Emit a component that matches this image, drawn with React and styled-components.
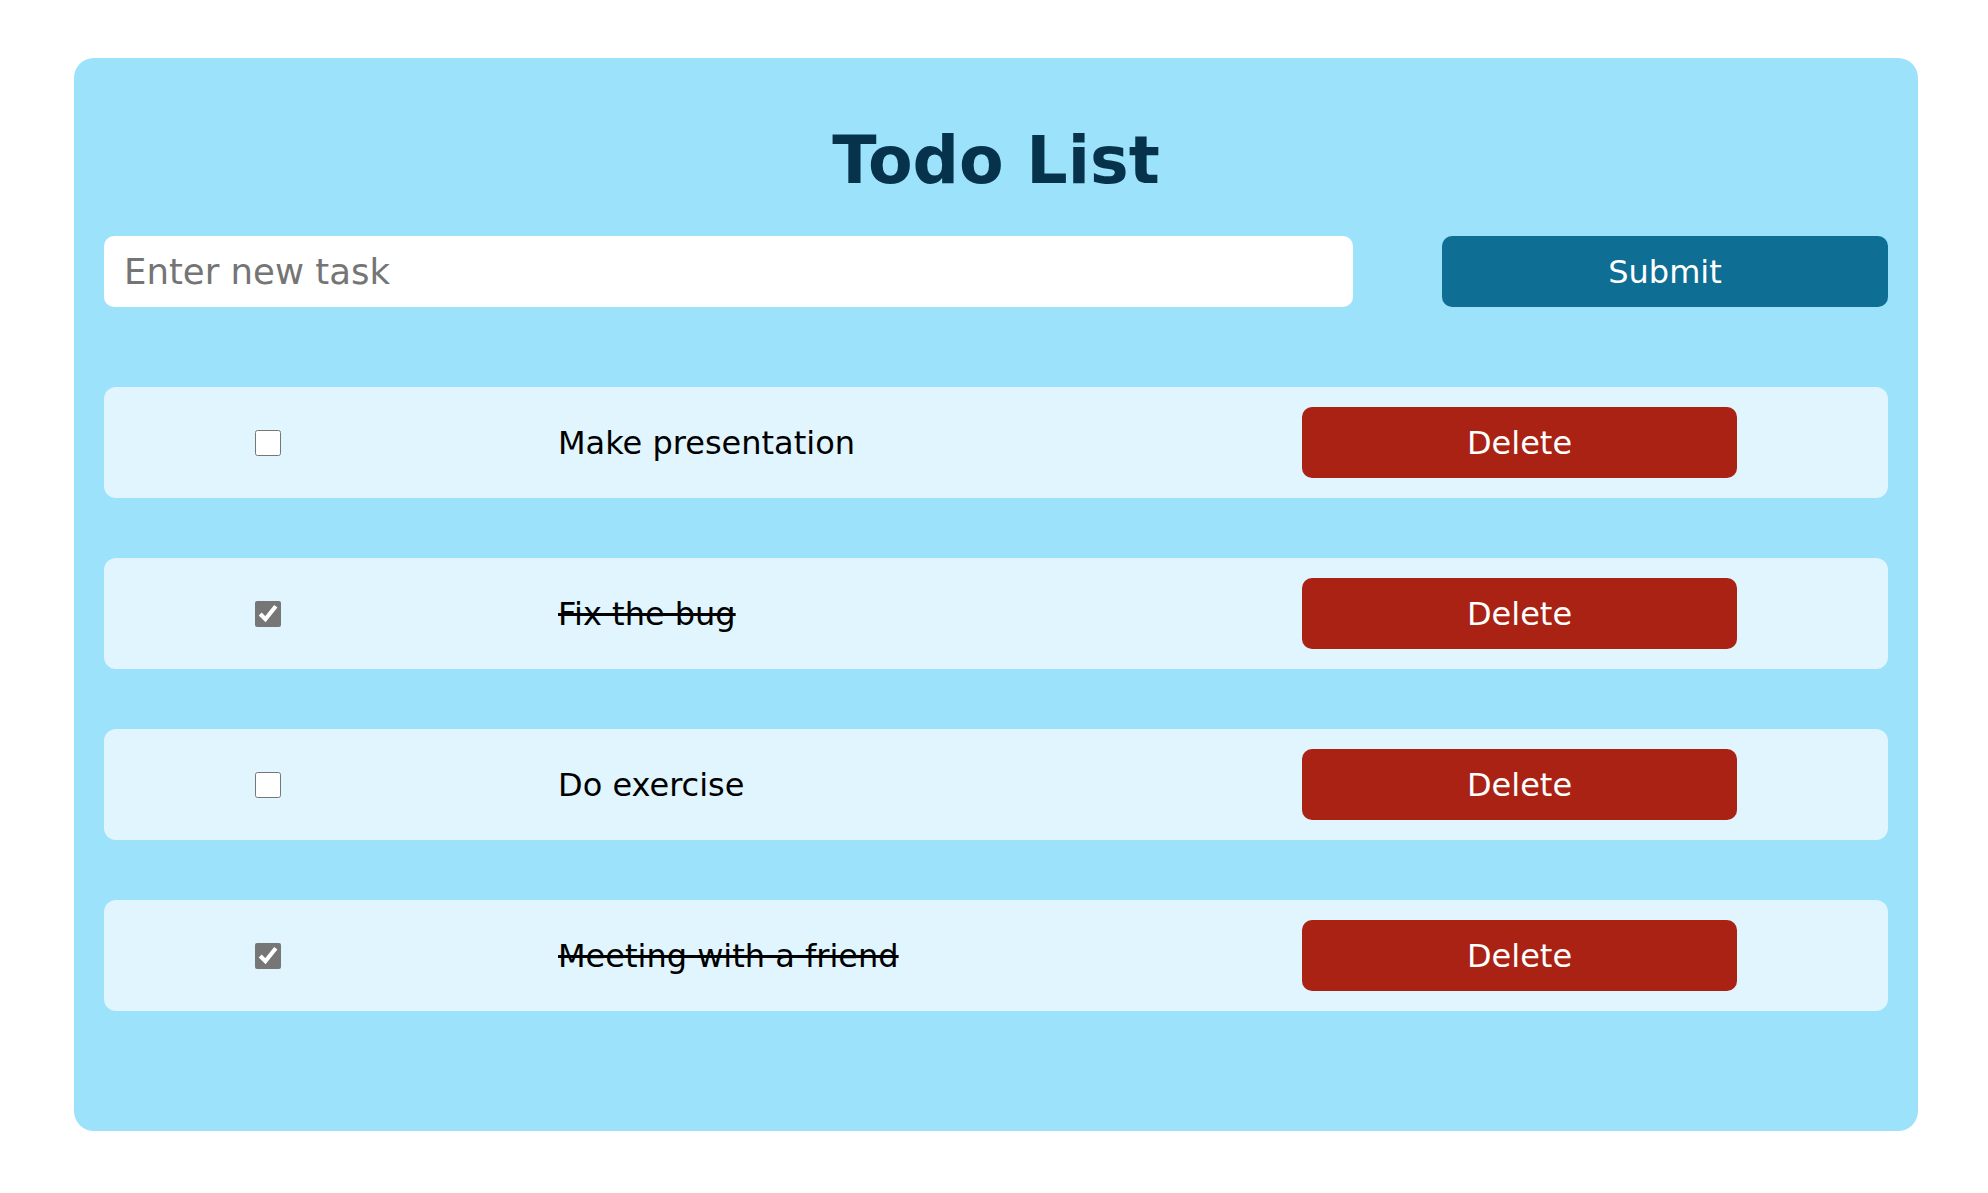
import React, { useState } from 'react'
import styled, { createGlobalStyle } from 'styled-components'

const GlobalStyle = createGlobalStyle`
body{
    margin:0;
    background:white;
    font-family:"DejaVu Sans", Verdana, sans-serif;
}
`

const Container = styled.div`
width:1844px;
margin:58px 70px 0px 74px;
padding:30px;
box-sizing:border-box;
background-color:#9de2fb;
border-radius:20px;
`

const Title = styled.h1`
margin:35px 0px 38px;
font-size:65px;
line-height:75px;
font-weight:700;
text-align:center;
color:#06334b;
`

const Form = styled.form`
display:flex;
justify-content:space-between;
align-items:center;
`

const Input = styled.input`
width:70%;
height:71px;
box-sizing:border-box;
padding:0px 20px;
border:none;
border-radius:10px;
background:white;
font-family:inherit;
font-size:35.5px;
outline:none;
&::placeholder{
    color:#757575;
}
`

const Button = styled.button`
width:${props => props.width || '25%'};
height:71px;
border:none;
border-radius:10px;
background-color:${props => props.color};
color:white;
font-family:inherit;
font-size:32px;
cursor:pointer;
`

const List = styled.ul`
list-style:none;
margin:80px 0px 90px;
padding:0px;
display:flex;
flex-direction:column;
gap:60px;
`

const Item = styled.li`
display:grid;
grid-template-columns:26px 1fr 435px;
column-gap:277px;
align-items:center;
padding:20px 151px;
background-color:#e0f5fd;
border-radius:12px;
`

const Check = styled.input`
width:26px;
height:26px;
margin:0px;
accent-color:#767676;
`

const Text = styled.span`
font-size:32px;
color:black;
text-decoration:${props => props.done ? 'line-through' : 'none'};
`

const initial = [
    { id: 1, text: 'Make presentation', done: false },
    { id: 2, text: 'Fix the bug', done: true },
    { id: 3, text: 'Do exercise', done: false },
    { id: 4, text: 'Meeting with a friend', done: true },
]

const App = () => {
    const [todos, setTodos] = useState(initial)
    const [task, setTask] = useState('')

    const submitHandler = (e) => {
        e.preventDefault()
        if (!task.trim()) return
        setTodos([...todos, { id: Date.now(), text: task, done: false }])
        setTask('')
    }

    const toggle = (id) => setTodos(todos.map(t => t.id === id ? { ...t, done: !t.done } : t))
    const remove = (id) => setTodos(todos.filter(t => t.id !== id))

    return (
        <>
            <GlobalStyle />
            <Container>
                <Title>Todo List</Title>
                <Form onSubmit={submitHandler}>
                    <Input placeholder="Enter new task" value={task} onChange={(e) => setTask(e.target.value)} />
                    <Button type="submit" color="#0e6e94">Submit</Button>
                </Form>
                <List>
                    {todos.map(t => (
                        <Item key={t.id}>
                            <Check type="checkbox" checked={t.done} onChange={() => toggle(t.id)} />
                            <Text done={t.done}>{t.text}</Text>
                            <Button type="button" width="100%" color="#a92213" onClick={() => remove(t.id)}>Delete</Button>
                        </Item>
                    ))}
                </List>
            </Container>
        </>
    )
}

export default App
